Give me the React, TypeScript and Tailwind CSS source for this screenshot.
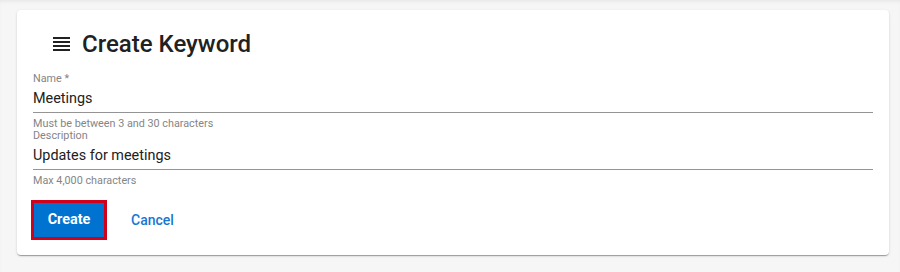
import React from "react";

function ReorderIcon() {
  return (
    <svg width="17" height="14" viewBox="0 0 17 14" className="block shrink-0">
      <rect x="0" y="0" width="17" height="2" fill="#212121" />
      <rect x="0" y="4" width="17" height="2" fill="#212121" />
      <rect x="0" y="8" width="17" height="2" fill="#212121" />
      <rect x="0" y="12" width="17" height="2" fill="#212121" />
    </svg>
  );
}

function Field({ label, value, helper }: { label: string; value: string; helper: string }) {
  return (
    <div className="flex flex-col">
      <div className="text-[10.8px] leading-[12px] text-[#858585]">{label}</div>
      <div className="pt-[4px] pb-[3px] border-b border-[#949494] text-[14.4px] leading-[20px] text-[#212121]">
        {value}
      </div>
      <div className="mt-[5px] text-[10.8px] leading-[12px] text-[#858585]">{helper}</div>
    </div>
  );
}

export default function App() {
  return (
    <div
      className="w-[900px] h-[272px] bg-[#f6f6f6] pt-[10px] pl-[17px] shadow-[inset_0_3px_4px_-2px_rgba(0,0,0,0.08)]"
      style={{ fontFamily: "Roboto, 'Noto Sans', sans-serif" }}
    >
      <div className="w-[872px] h-[245px] bg-white rounded-[4px] shadow-[0_2px_1px_-1px_rgba(0,0,0,0.2),0_1px_1px_0_rgba(0,0,0,0.14),0_1px_3px_0_rgba(0,0,0,0.12)] px-[16px] pt-[18px]">
        <div className="flex items-center pl-[20px] h-[32px]">
          <ReorderIcon />
          <h1 className="ml-[12px] text-[24px] leading-[32px] font-medium text-[#212121]">Create Keyword</h1>
        </div>
        <div className="mt-[13px]">
          <Field label="Name *" value="Meetings" helper="Must be between 3 and 30 characters" />
        </div>
        <Field label="Description" value="Updates for meetings" helper="Max 4,000 characters" />
        <div className="mt-[13px] flex items-center">
          <button className="ml-[-2px] w-[76px] h-[40px] border-[3px] border-[#d0021b] bg-[#0073d1] text-white font-bold text-[14.4px] flex items-center justify-center">
            Create
          </button>
          <button className="ml-[8px] px-[16px] h-[40px] pt-[1px] text-[#1976d2] font-medium text-[14px]">
            Cancel
          </button>
        </div>
      </div>
    </div>
  );
}
